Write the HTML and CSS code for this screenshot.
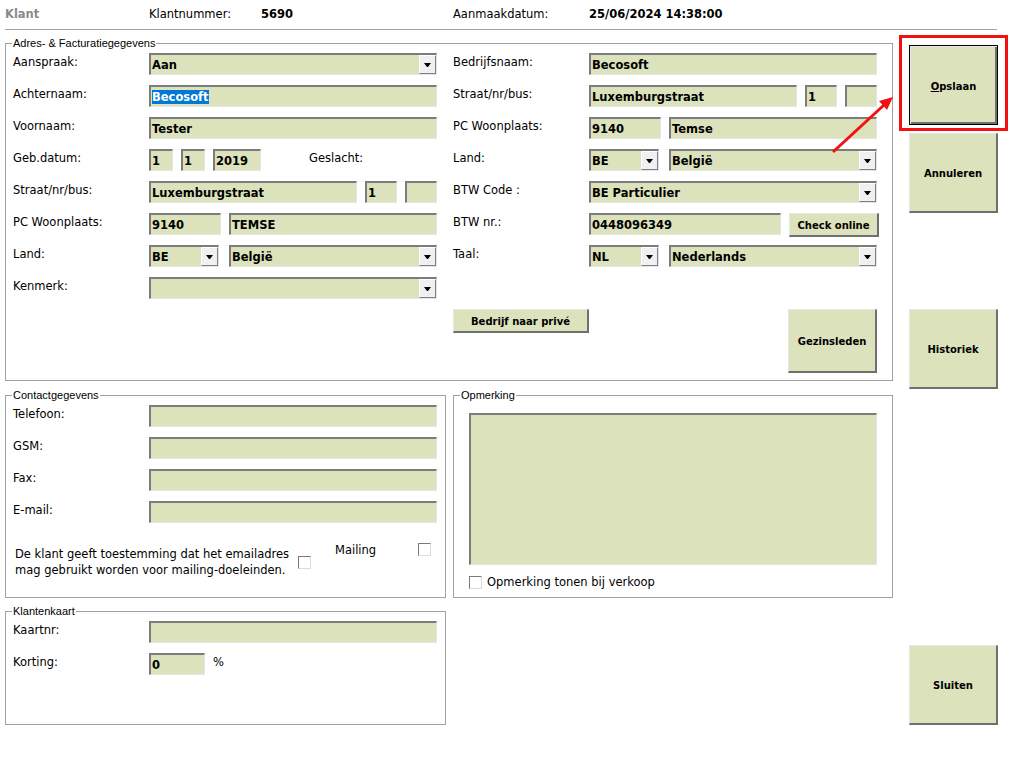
FILE: index.html
```html
<!DOCTYPE html>
<html lang="nl">
<head>
    <meta charset="UTF-8">
    <title>Klant</title>
    <link rel="stylesheet" href="styles.css">
</head>
<body>
<div class="window">
    <div class="top">
        <span class="title">Klant</span>
        <span>Klantnummer:</span>
        <span class="bold">5690</span>
        <span>Aanmaakdatum:</span>
        <span class="bold">25/06/2024 14:38:00</span>
    </div>

    <div class="layout">
        <div class="main">
            <div class="group adres">
                <span class="group-title">Adres- &amp; Facturatiegegevens</span>

                <div class="form">
                    <span class="lbl">Aanspraak:</span>
                    <div class="fld select"><span class="txt">Aan</span><span class="drop"></span></div>

                    <span class="lbl">Achternaam:</span>
                    <div class="fld"><span class="sel">Becosoft</span></div>

                    <span class="lbl">Voornaam:</span>
                    <div class="fld">Tester</div>

                    <span class="lbl">Geb.datum:</span>
                    <div class="row">
                        <div class="fld w24">1</div>
                        <div class="fld w24">1</div>
                        <div class="fld w48">2019</div>
                        <span class="lbl geslacht">Geslacht:</span>
                    </div>

                    <span class="lbl">Straat/nr/bus:</span>
                    <div class="row">
                        <div class="fld w208">Luxemburgstraat</div>
                        <div class="fld w32">1</div>
                        <div class="fld w32"></div>
                    </div>

                    <span class="lbl">PC Woonplaats:</span>
                    <div class="row">
                        <div class="fld w72">9140</div>
                        <div class="fld w208">TEMSE</div>
                    </div>

                    <span class="lbl">Land:</span>
                    <div class="row wide-gap">
                        <div class="fld select w70"><span class="txt">BE</span><span class="drop"></span></div>
                        <div class="fld select w208"><span class="txt">België</span><span class="drop"></span></div>
                    </div>

                    <span class="lbl">Kenmerk:</span>
                    <div class="fld select"><span class="txt"></span><span class="drop"></span></div>
                </div>

                <div class="col-right">
                    <div class="form">
                        <span class="lbl">Bedrijfsnaam:</span>
                        <div class="fld">Becosoft</div>

                        <span class="lbl">Straat/nr/bus:</span>
                        <div class="row">
                            <div class="fld w208">Luxemburgstraat</div>
                            <div class="fld w32">1</div>
                            <div class="fld w32"></div>
                        </div>

                        <span class="lbl">PC Woonplaats:</span>
                        <div class="row">
                            <div class="fld w72">9140</div>
                            <div class="fld w208">Temse</div>
                        </div>

                        <span class="lbl">Land:</span>
                        <div class="row wide-gap">
                            <div class="fld select w70"><span class="txt">BE</span><span class="drop"></span></div>
                            <div class="fld select w208"><span class="txt">België</span><span class="drop"></span></div>
                        </div>

                        <span class="lbl">BTW Code :</span>
                        <div class="fld select"><span class="txt">BE Particulier</span><span class="drop"></span></div>

                        <span class="lbl">BTW nr.:</span>
                        <div class="row">
                            <div class="fld w192">0448096349</div>
                            <button class="btn btn-check">Check online</button>
                        </div>

                        <span class="lbl">Taal:</span>
                        <div class="row wide-gap">
                            <div class="fld select w70"><span class="txt">NL</span><span class="drop"></span></div>
                            <div class="fld select w208"><span class="txt">Nederlands</span><span class="drop"></span></div>
                        </div>
                    </div>

                    <div class="actions">
                        <button class="btn btn-wide">Bedrijf naar privé</button>
                        <button class="btn btn-tall">Gezinsleden</button>
                    </div>
                </div>
            </div>

            <div class="lower">
                <div class="lower-left">
                    <div class="group contact">
                        <span class="group-title">Contactgegevens</span>
                        <div class="form">
                            <span class="lbl">Telefoon:</span>
                            <div class="fld"></div>
                            <span class="lbl">GSM:</span>
                            <div class="fld"></div>
                            <span class="lbl">Fax:</span>
                            <div class="fld"></div>
                            <span class="lbl">E-mail:</span>
                            <div class="fld"></div>
                        </div>
                        <div class="consent">
                            <span class="consent-text">De klant geeft toestemming dat het emailadres mag gebruikt worden voor mailing-doeleinden.</span>
                            <span class="check check-consent"></span>
                            <span class="lbl mailing">Mailing</span>
                            <span class="check check-mailing"></span>
                        </div>
                    </div>

                    <div class="group kaart">
                        <span class="group-title">Klantenkaart</span>
                        <div class="form">
                            <span class="lbl">Kaartnr:</span>
                            <div class="fld"></div>
                            <span class="lbl">Korting:</span>
                            <div class="row">
                                <div class="fld w56">0</div>
                                <span class="lbl">%</span>
                            </div>
                        </div>
                    </div>
                </div>

                <div class="group opmerking">
                    <span class="group-title">Opmerking</span>
                    <div class="fld memo"></div>
                    <div class="memo-opt">
                        <span class="check"></span>
                        <span class="memo-lbl">Opmerking tonen bij verkoop</span>
                    </div>
                </div>
            </div>
        </div>

        <div class="side">
            <div class="highlight">
                <button class="btn btn-big btn-default"><span><u>O</u>pslaan</span></button>
            </div>
            <button class="btn btn-big annuleren">Annuleren</button>
            <button class="btn btn-big historiek">Historiek</button>
            <button class="btn btn-big sluiten">Sluiten</button>
        </div>
    </div>

    <svg class="arrow" width="1029" height="760" viewBox="0 0 1029 760">
        <line x1="833" y1="152" x2="884" y2="105" stroke="#f51010" stroke-width="3"/>
        <polygon points="893,97 887,110 879,101" fill="#f51010"/>
    </svg>
</div>
</body>
</html>
```

FILE: styles.css
```css
body {
    margin: 0;
    background-color: #fff;
    font-family: "DejaVu Sans", Verdana, sans-serif;
    font-size: 11.5px;
    color: #000;
}
.window {
    position: relative;
    width: 1029px;
    height: 760px;
    padding-left: 5px;
    box-sizing: border-box;
}
.top {
    display: grid;
    grid-template-columns: 144px 112px 192px 136px auto;
    align-items: center;
    width: 992px;
    height: 30px;
    padding-bottom: 2px;
    box-sizing: border-box;
    border-bottom: 1px solid #a0a0a0;
}
.title {
    font-weight: bold;
    color: #8a8a8a;
}
.bold {
    font-weight: bold;
}
.layout {
    display: flex;
    align-items: flex-start;
    margin-top: 13px;
}
.main {
    width: 888px;
    flex-shrink: 0;
}
.group {
    position: relative;
    border: 1px solid #a0a0a0;
    box-sizing: border-box;
}
.group-title {
    position: absolute;
    top: -7px;
    left: 6px;
    padding: 0 1px;
    background-color: #fff;
    font-family: "Liberation Sans", Arial, sans-serif;
    font-size: 11px;
    line-height: 13px;
}
.adres {
    display: flex;
    gap: 16px;
    height: 338px;
    padding: 9px 0 0 7px;
}
.form {
    display: grid;
    grid-template-columns: 136px 288px;
    grid-auto-rows: 22px;
    row-gap: 10px;
    align-content: start;
}
.col-right {
    width: 424px;
}
.lbl {
    padding-top: 2px;
    line-height: 14px;
    white-space: nowrap;
}
.row {
    display: flex;
    gap: 8px;
}
.row > * {
    flex-shrink: 0;
}
.wide-gap {
    gap: 10px;
}
.geslacht {
    margin-left: 40px;
}
.fld {
    box-sizing: border-box;
    height: 22px;
    padding-left: 1px;
    background-color: #dce2bc;
    border-style: solid;
    border-width: 2px 1px 1px 2px;
    border-color: #7c7c7c #e4e4e4 #e4e4e4 #7c7c7c;
    font-weight: bold;
    line-height: 21px;
    white-space: nowrap;
    overflow: hidden;
}
.w24 { width: 24px; }
.w32 { width: 32px; }
.w48 { width: 48px; }
.w56 { width: 56px; }
.w70 { width: 70px; }
.w72 { width: 72px; }
.w192 { width: 192px; }
.w208 { width: 208px; }
.sel {
    background-color: #0078d7;
    color: #fff;
}
.select {
    display: flex;
}
.select .txt {
    flex: 1;
    overflow: hidden;
}
.drop {
    display: flex;
    align-items: center;
    justify-content: center;
    width: 17px;
    box-sizing: border-box;
    background-color: #f0f0f0;
    border: 1px solid;
    border-color: #fff #808080 #808080 #fff;
}
.drop::after {
    content: "";
    width: 1px;
    height: 0;
    border-left: 3px solid transparent;
    border-right: 3px solid transparent;
    border-top: 4px solid #000;
}
.btn {
    display: flex;
    align-items: center;
    justify-content: center;
    box-sizing: border-box;
    padding: 2px 0 0;
    background-color: #dce2bc;
    border-style: solid;
    border-width: 1px 2px 2px 1px;
    border-color: #e6e6e6 #6f6f6f #6f6f6f #e6e6e6;
    font-family: "DejaVu Sans", Verdana, sans-serif;
    font-size: 10px;
    font-weight: bold;
    color: #000;
}
.btn-check {
    width: 90px;
    height: 24px;
}
.btn-wide {
    width: 136px;
    height: 24px;
}
.btn-tall {
    width: 89px;
    height: 64px;
}
.actions {
    display: flex;
    justify-content: space-between;
    align-items: flex-start;
    margin-top: 42px;
}
.lower {
    display: flex;
    align-items: flex-start;
    gap: 7px;
    margin-top: 14px;
}
.lower-left {
    display: flex;
    flex-direction: column;
    gap: 13px;
    width: 441px;
}
.contact {
    height: 203px;
    padding: 9px 0 0 7px;
}
.consent {
    display: flex;
    align-items: flex-start;
    margin-top: 18px;
    padding-left: 2px;
}
.consent-text {
    width: 283px;
    margin-top: 5px;
    line-height: 16px;
}
.check {
    width: 13px;
    height: 13px;
    box-sizing: border-box;
    flex-shrink: 0;
    background-color: #fff;
    border: 1px solid;
    border-color: #7a7a7a #dcdcdc #dcdcdc #7a7a7a;
}
.check-consent {
    margin-top: 15px;
}
.mailing {
    width: 83px;
    margin-left: 24px;
}
.check-mailing {
    margin-top: 2px;
}
.kaart {
    height: 114px;
    padding: 9px 0 0 7px;
}
.opmerking {
    width: 440px;
    height: 203px;
    padding: 17px 0 0 15px;
}
.memo {
    width: 408px;
    height: 152px;
}
.memo-opt {
    display: flex;
    align-items: center;
    gap: 5px;
    margin-top: 10px;
}
.memo-lbl {
    line-height: 14px;
}
.side {
    display: flex;
    flex-direction: column;
    align-items: flex-start;
    margin-left: 16px;
    margin-top: -8px;
}
.highlight {
    margin-left: -10px;
    padding: 7px 7px 3px 7px;
    border: 3px solid #f51010;
}
.btn-big {
    width: 89px;
    height: 80px;
}
.btn-default {
    border: 1px solid #000;
    box-shadow: inset 1px 1px #e6e6e6, inset -2px -2px #6f6f6f;
}
.annuleren {
    margin-top: 2px;
}
.historiek {
    margin-top: 96px;
}
.sluiten {
    margin-top: 256px;
}
.arrow {
    position: absolute;
    top: 0;
    left: 0;
    pointer-events: none;
}
```
